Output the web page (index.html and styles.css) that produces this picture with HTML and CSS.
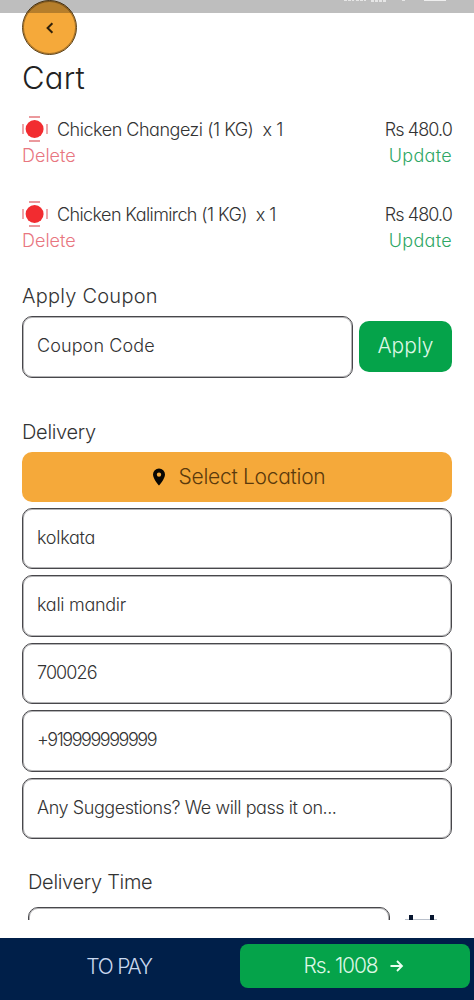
FILE: index.html
```html
<!DOCTYPE html>
<html lang="en">
<head>
<meta charset="utf-8">
<title>Cart</title>
<link rel="stylesheet" href="styles.css">
</head>
<body>
<div class="status">
  <svg width="474" height="13" viewBox="0 0 474 13"><path d="M344 0h10M356 0h10M371 1h16M402 0h4" stroke="#e6e6e6" stroke-width="2" stroke-dasharray="3 1"/><path d="M424 0h22" stroke="#eee" stroke-width="2"/></svg>
</div>
<main class="page">
  <button class="back" aria-label="Back"><svg width="10" height="14" viewBox="0 0 10 14"><path d="M7.4 2.200 2.600 7l4.800 4.800" fill="none" stroke="#30210b" stroke-width="2"/></svg></button>
  <h1 class="title"><span class="t-cart">Cart</span></h1>
  <section class="item">
    <div class="row"><svg class="mark" width="26" height="26" viewBox="0 0 26 26"><path d="M7 1h11M7 25h11M1 8v10M25 8v10" stroke="#e5787d" stroke-width="1.3"/><circle cx="12.6" cy="13" r="9" fill="#f22c30"/></svg><span class="name t-changezi">Chicken Changezi (1 KG)&nbsp; x 1</span><span class="t-price">Rs 480.0</span></div>
    <div class="row"><a class="delete">Delete</a><a class="update">Update</a></div>
  </section>
  <section class="item">
    <div class="row"><svg class="mark" width="26" height="26" viewBox="0 0 26 26"><path d="M7 1h11M7 25h11M1 8v10M25 8v10" stroke="#e5787d" stroke-width="1.3"/><circle cx="12.6" cy="13" r="9" fill="#f22c30"/></svg><span class="name t-kalimirch">Chicken Kalimirch (1 KG)&nbsp; x 1</span><span class="t-price">Rs 480.0</span></div>
    <div class="row"><a class="delete">Delete</a><a class="update">Update</a></div>
  </section>
  <h2 class="heading"><span class="t-coupon-head">Apply Coupon</span></h2>
  <div class="coupon"><div class="field"><span class="t-coupon">Coupon Code</span></div><button class="apply"><span class="t-apply">Apply</span></button></div>
  <h2 class="heading delivery"><span class="t-delivery">Delivery</span></h2>
  <button class="location"><svg width="14" height="18" viewBox="0 0 14 18"><path fill="#080704" fill-rule="evenodd" d="M7 .5A6 6 0 0 0 1 6.5C1 11 7 17.500 7 17.500S13 11 13 6.500A6 6 0 0 0 7 .5Zm0 3.900a2.200 2.200 0 1 1 0 4.400 2.200 2.200 0 0 1 0-4.400Z"/></svg><span class="t-select">Select Location</span></button>
  <div class="fields">
    <div class="field"><span class="t-city">kolkata</span></div>
    <div class="field"><span class="t-street">kali mandir</span></div>
    <div class="field"><span class="t-pin">700026</span></div>
    <div class="field"><span class="t-phone">+919999999999</span></div>
    <div class="field"><span class="t-note">Any Suggestions? We will pass it on...</span></div>
  </div>
  <h2 class="heading time"><span class="t-time">Delivery Time</span></h2>
  <div class="slot"><div class="field"></div><svg width="34" height="20" viewBox="0 0 34 20"><path d="M1 5h32" stroke="#b9c0cb" stroke-width="2"/><path d="M5 0h4v5H5zM26 0h4v5h-4z" fill="#07152e"/></svg></div>
</main>
<footer class="bar"><div class="topay"><span class="t-pay">TO PAY</span></div><button class="total"><span class="t-total">Rs. 1008</span><svg width="14" height="14" viewBox="0 0 14 14"><path d="M.5 7H12M7 2l5 5-5 5" fill="none" stroke="#ecfff2" stroke-width="1.800"/></svg></button></footer>
</body>
</html>
```
FILE: styles.css
```css
* { box-sizing: border-box; }
body { margin: 0; width: 474px; height: 1000px; overflow: hidden; background: #fff; color: #333; font: 300 18px/26px Inter, "Liberation Sans", sans-serif; font-feature-settings: "cv11"; display: flex; flex-direction: column; }
button { border: 0; padding: 0; font: inherit; font-feature-settings: inherit; color: inherit; }
svg { display: block; flex: none; }
span, a { white-space: nowrap; }
.status { position: absolute; top: 0; left: 0; width: 474px; height: 13px; background: rgba(0, 0, 0, .255); z-index: 2; }
.page { height: 920px; flex: none; overflow: hidden; padding: 0 22px; }
.back { display: flex; align-items: center; justify-content: center; width: 55px; height: 55px; border: 1px solid #5b431e; border-radius: 50%; background: #f5a93a; box-shadow: inset 0 0 0 1px #a87429; }
.title { margin: 0; height: 46px; font-size: 31px; line-height: 46px; font-weight: 300; color: #222; }
.item { margin-top: 15px; height: 52px; }
.item + .item { margin-top: 33px; }
.row { display: flex; justify-content: space-between; height: 26px; line-height: 28px; }
.mark { margin-right: 9px; }
.name { flex: 1; }
.delete { color: #e87680; }
.update { color: #2fa765; }
.heading { margin: 27px 0 0; height: 32px; font-size: 20px; line-height: 32px; font-weight: 300; }
.coupon { display: flex; align-items: center; gap: 6px; margin-top: 4px; }
.field { height: 61.500px; flex: 1; display: flex; align-items: center; padding: 0 14px 1px; border: 1px solid #48474b; border-radius: 10px; box-shadow: inset 0 0 0 1px #b4b4b6; }
.apply { width: 93px; height: 51px; padding-bottom: 1px; border-radius: 10px; background: #05a34a; color: #dcf7e4; font-size: 21px; }
.delivery { margin-top: 38px; }
.location { display: flex; align-items: center; justify-content: center; gap: 13px; width: 100%; height: 50px; margin-top: 4px; border-radius: 10px; background: #f5a93a; color: #5b3a0c; font-size: 21px; }
.location svg { margin-left: 3px; }
.fields { display: grid; gap: 6px; margin-top: 6px; }
.heading.time { margin: 27px 0 0 6px; }
.slot { display: flex; gap: 14px; margin: 9px 14px 0 6px; }
.slot svg { margin-top: 8px; }
.bar { display: flex; align-items: flex-start; height: 62px; margin-top: 18px; padding: 6px 4px 0 0; background: #001f49; }
.topay { width: 238px; margin-right: 2px; height: 44px; display: flex; align-items: center; justify-content: center; padding-top: 2px; color: #c9d8ef; font-size: 21px; }
.total { flex: 1; height: 44px; display: flex; align-items: center; justify-content: center; gap: 13px; padding-right: 2px; border-radius: 8px; background: #05a34a; color: #dcf7e4; font-size: 21px; }

/* Tracking per label */
.t-cart { letter-spacing: .2px; }
.t-changezi { letter-spacing: -.48px; }
.t-kalimirch { letter-spacing: -.6px; }
.t-price { letter-spacing: -.9px; }
.update { letter-spacing: .3px; }
.t-coupon-head { letter-spacing: .24px; }
.t-coupon { letter-spacing: .1px; }
.t-delivery, .t-time { letter-spacing: -.3px; }
.t-select { letter-spacing: -.28px; }
.t-city, .t-street { letter-spacing: -.28px; }
.t-pin { letter-spacing: -.9px; }
.t-phone { letter-spacing: -1.450px; }
.t-note { letter-spacing: -.43px; }
.t-pay { letter-spacing: -1.200px; }
.t-total { letter-spacing: -1.150px; }
```
